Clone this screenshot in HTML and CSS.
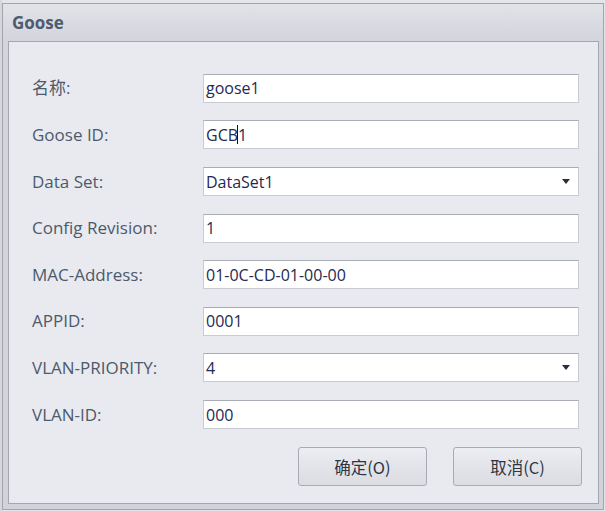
FILE: index.html
```html
<!DOCTYPE html>
<html>
<head>
<meta charset="utf-8">
<link rel="stylesheet" href="styles.css">
</head>
<body>
<div class="backdrop">
  <div class="dialog">
    <div class="titlebar">Goose</div>
    <div class="panel">
      <div class="form">
        <label class="lbl">名称:</label>
        <div class="field"><span class="val">goose1</span></div>
        <label class="lbl">Goose ID:</label>
        <div class="field"><span class="val">GCB<span class="caret"></span>1</span></div>
        <label class="lbl">Data Set:</label>
        <div class="field combo"><span class="val">DataSet1</span><span class="arrow"></span></div>
        <label class="lbl">Config Revision:</label>
        <div class="field"><span class="val">1</span></div>
        <label class="lbl">MAC-Address:</label>
        <div class="field"><span class="val">01-0C-CD-01-00-00</span></div>
        <label class="lbl">APPID:</label>
        <div class="field"><span class="val">0001</span></div>
        <label class="lbl">VLAN-PRIORITY:</label>
        <div class="field combo"><span class="val">4</span><span class="arrow"></span></div>
        <label class="lbl">VLAN-ID:</label>
        <div class="field"><span class="val">000</span></div>
      </div>
      <div class="buttons">
        <button class="btn">确定(O)</button>
        <button class="btn">取消(C)</button>
      </div>
    </div>
  </div>
</div>
</body>
</html>
```
FILE: styles.css
```css
* { box-sizing: border-box; }
html, body { margin: 0; padding: 0; }
body {
  width: 605px;
  height: 511px;
  overflow: hidden;
  background: #e4e5e9;
  font-family: "Open Sans", "Noto Sans CJK SC", sans-serif;
}
.backdrop {
  padding: 3px 1px 1px 2px;
  height: 511px;
  background: linear-gradient(90deg, #d6d7dd 0, #d6d7dd 2px, transparent 2px);
}
.dialog {
  height: 507px;
  border: 1px solid #a2a4ae;
  background: linear-gradient(180deg, #e2e3e8 0, #d3d4dc 38px, #d1d2da 100%);
  display: flex;
  flex-direction: column;
  padding: 0 4px 5px 5px;
}
.titlebar {
  height: 37px;
  display: flex;
  align-items: center;
  padding-left: 4px;
  font-weight: bold;
  font-size: 17px;
  color: #4d5b70;
  font-family: "Open Sans", sans-serif;
}
.panel {
  flex: 1;
  border: 1px solid #a4a6b0;
  background: #e9eaef;
  padding: 32px 19px 17px 23px;
  display: flex;
  flex-direction: column;
}
.form {
  display: grid;
  grid-template-columns: 171px 1fr;
  row-gap: 17.6px;
  align-items: center;
}
.lbl {
  font-size: 17px;
  color: #4c5a6c;
  line-height: 22px;
}
.field {
  height: 29px;
  background: #fff;
  border: 1px solid #c9cbd2;
  border-top-color: #a9acb5;
  display: flex;
  align-items: center;
  padding-left: 2px;
}
.val {
  font-size: 16px;
  color: #232a52;
  display: flex;
  align-items: center;
  flex: 1;
}
.caret {
  display: inline-block;
  width: 1px;
  height: 19px;
  background: #111;
  margin: 0 0 0 -1px;
}
.combo .arrow {
  width: 0;
  height: 0;
  border-left: 4.5px solid transparent;
  border-right: 4.5px solid transparent;
  border-top: 5px solid #2b2d3a;
  margin-right: 8px;
}
.buttons {
  display: flex;
  justify-content: flex-end;
  gap: 26px;
  margin-top: 18px;
  margin-right: -3px;
}
.btn {
  width: 129px;
  height: 39px;
  border: 1px solid #a9abb4;
  border-radius: 3px;
  background: linear-gradient(180deg, #eceef2 0, #e3e4ea 50%, #dcdde3 100%);
  font-family: "Noto Sans CJK SC", "Open Sans", sans-serif;
  font-size: 16.5px;
  color: #2e3442;
  padding: 0;
}
```
